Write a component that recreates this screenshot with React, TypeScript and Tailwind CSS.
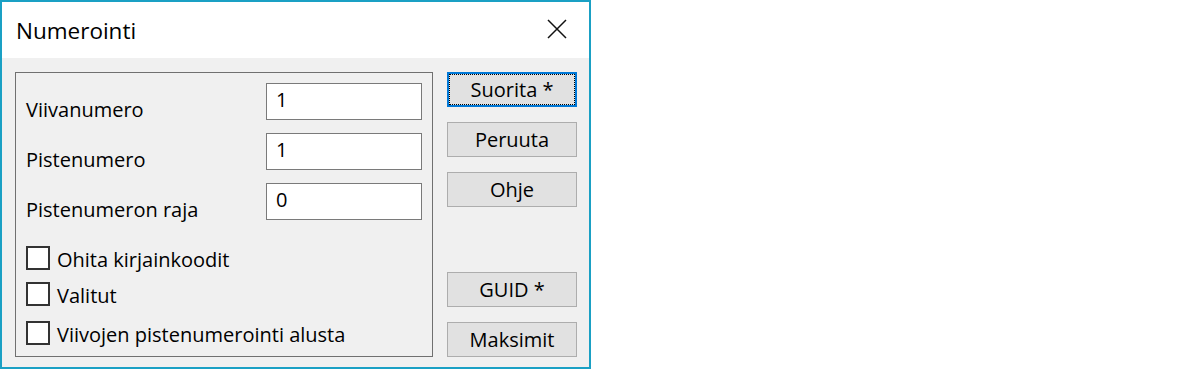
import React from 'react';

function Field({ label, value }: { label: string; value: string }) {
  return (
    <div className="flex justify-between h-[37px]">
      <span className="pt-[17px] leading-[20px]">{label}</span>
      <div className="w-[156px] h-[37px] border border-[#7a7a7a] bg-white pl-[9px] pt-[6px] leading-[20px]">{value}</div>
    </div>
  );
}

function Check({ label, className = '' }: { label: string; className?: string }) {
  return (
    <div className={`flex items-start h-[24px] ${className}`}>
      <div className="w-[24px] h-[24px] border-2 border-[#333333] bg-white" />
      <span className="ml-[7px] pt-[2px] leading-[24px]">{label}</span>
    </div>
  );
}

function Btn({ label, focused = false, className = '' }: { label: string; focused?: boolean; className?: string }) {
  return (
    <button
      type="button"
      className={`relative w-[130px] h-[35px] bg-[#e1e1e1] pt-[1px] leading-[20px] text-black ${focused ? 'border-2 border-[#0078d7]' : 'border border-[#adadad]'} ${className}`}
    >
      {focused && <span className="absolute inset-0 border border-dotted border-black" />}
      {label}
    </button>
  );
}

export default function App() {
  return (
    <div className="w-[1200px] h-[369px] bg-white font-['Open_Sans',sans-serif] text-[20px] text-black">
      <div className="w-[591px] h-[369px] border-2 border-[#1aa0c4] flex flex-col">
        <div className="h-[56px] bg-white flex items-center justify-between pl-[14px] pr-[22px]">
          <span className="text-[22.5px] leading-[26px] pt-[2px]">Numerointi</span>
          <svg width="20" height="20" viewBox="0 0 20 20" className="mt-[-2px]">
            <path d="M1 1 L19 19 M19 1 L1 19" stroke="#111111" strokeWidth="1.5" fill="none" />
          </svg>
        </div>
        <div className="flex-1 bg-[#f0f0f0] flex pt-[14px] pl-[13px]">
          <div className="w-[418px] h-[285px] border border-[#707070] px-[10px] pt-[10px] flex flex-col">
            <div className="flex flex-col gap-[13px]">
              <Field label="Viivanumero" value="1" />
              <Field label="Pistenumero" value="1" />
              <Field label="Pistenumeron raja" value="0" />
            </div>
            <Check label="Ohita kirjainkoodit" className="mt-[26px]" />
            <Check label="Valitut" className="mt-[12px]" />
            <Check label="Viivojen pistenumerointi alusta" className="mt-[15px]" />
          </div>
          <div className="ml-[14px] w-[130px] flex flex-col">
            <Btn label="Suorita *" focused />
            <Btn label="Peruuta" className="mt-[15px]" />
            <Btn label="Ohje" className="mt-[15px]" />
            <Btn label="GUID *" className="mt-[65px]" />
            <Btn label="Maksimit" className="mt-[15px]" />
          </div>
        </div>
      </div>
    </div>
  );
}
